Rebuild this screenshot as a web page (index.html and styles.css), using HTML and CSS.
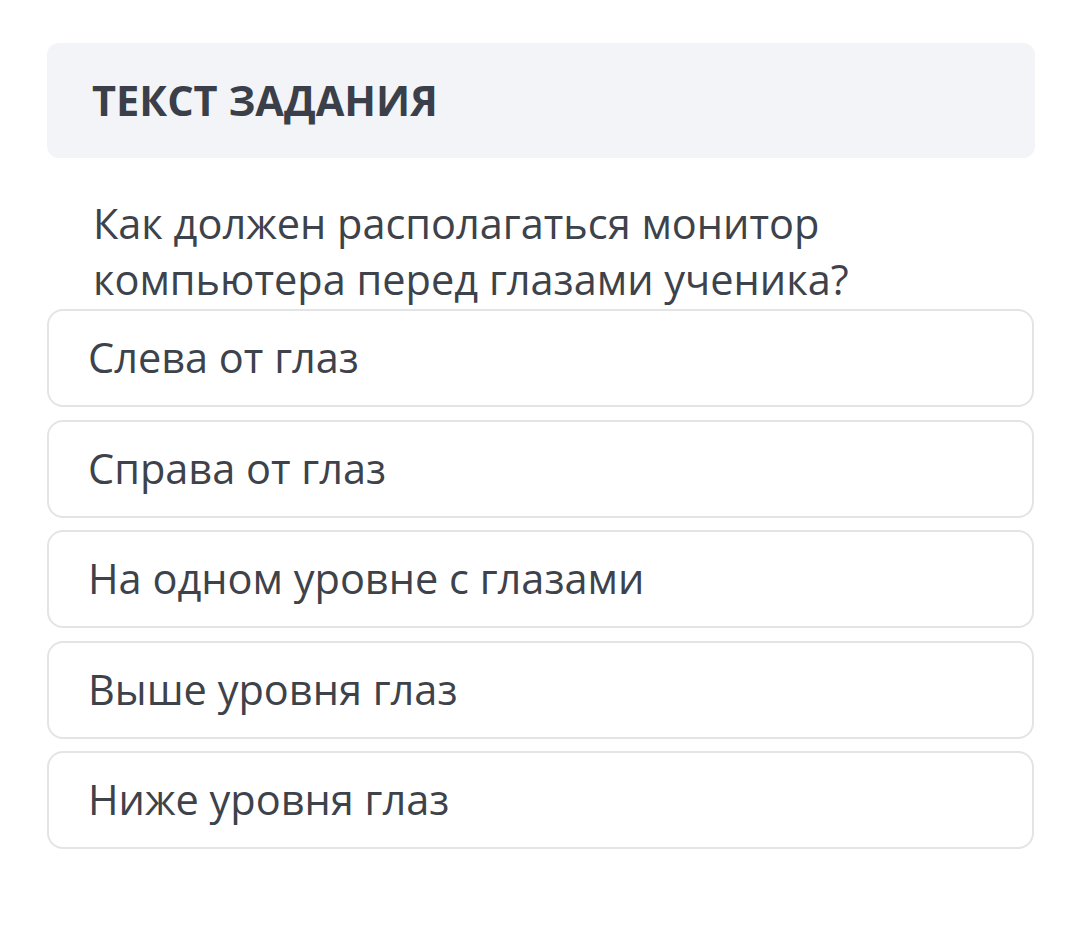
FILE: index.html
```html
<!DOCTYPE html>
<html lang="ru">
<head>
<meta charset="utf-8">
<link rel="stylesheet" href="styles.css">
</head>
<body>
<div class="page">
  <div class="header"><h1 class="title">ТЕКСТ ЗАДАНИЯ</h1></div>
  <p class="question">Как должен располагаться монитор компьютера перед глазами ученика?</p>
  <div class="options">
    <div class="option">Слева от глаз</div>
    <div class="option">Справа от глаз</div>
    <div class="option">На одном уровне с глазами</div>
    <div class="option">Выше уровня глаз</div>
    <div class="option">Ниже уровня глаз</div>
  </div>
</div>
</body>
</html>
```
FILE: styles.css
```css
* { box-sizing: border-box; }
html, body { margin: 0; padding: 0; background: #fff; }
body { font-family: "Open Sans", "Noto Sans", sans-serif; color: #3d424b; }
.page { padding: 43px 45px 0 47px; width: 1080px; }
.header {
  background: #f2f4f7;
  border-radius: 12px;
  height: 115px;
  display: flex;
  align-items: center;
  padding-left: 45px;
}
.title { margin: 0 0 2px 0; font-size: 41.5px; font-weight: 700; color: #3a3f49; }
.question {
  margin: 37px 0 0 46px;
  font-size: 41.5px;
  line-height: 56px;
  width: 820px;
}
.options { display: flex; flex-direction: column; gap: 12.5px; margin: 2px 1px 0 0; }
.option {
  height: 98px;
  border: 2px solid #e3e4e6;
  border-radius: 16px;
  display: flex;
  align-items: center;
  padding-left: 39px;
  font-size: 41.5px;
  padding-bottom: 2px;
}
```
